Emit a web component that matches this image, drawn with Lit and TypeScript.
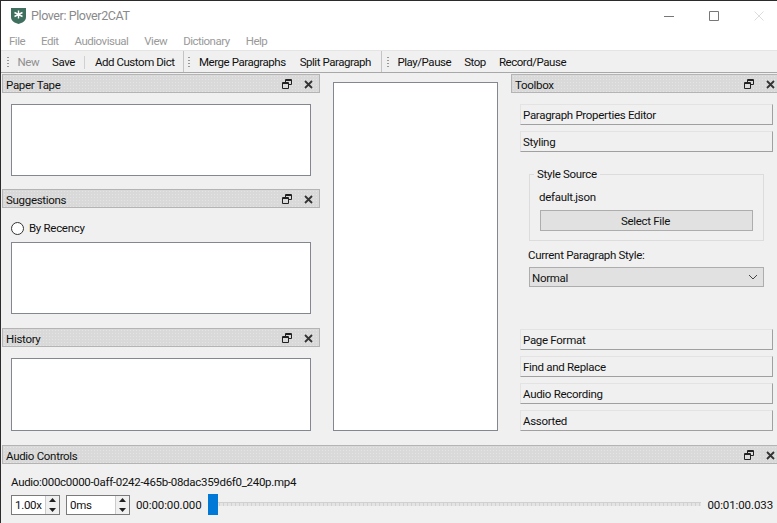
import { LitElement, css, html } from 'lit'
import { customElement } from 'lit/decorators.js'

const floatIcon = html`<svg width="10" height="10" viewBox="0 0 10 10" fill="none" stroke="#222" stroke-width="1">
  <path d="M3.5 3V.5h6v5H7M.5 3.5h6v6h-6zM.5 4.5h6M3.5 1.5h6" />
</svg>`
const closeIcon = html`<svg width="9" height="9" viewBox="0 0 9 9" fill="none" stroke="#333" stroke-width="1.8">
  <path d="M1 1l7 7M8 1l-7 7" />
</svg>`
const spinArrows = html`<span class="spin">
  <svg width="13" height="9" viewBox="0 0 13 9"><path d="M6.5 2l3.5 4H3z" fill="#222" /></svg>
  <svg width="13" height="9" viewBox="0 0 13 9"><path d="M6.5 7L3 3h7z" fill="#222" /></svg>
</span>`

@customElement('app-root')
export class AppRoot extends LitElement {
  static styles = css`
    :host {
      display: block;
      width: 777px;
      height: 523px;
      overflow: hidden;
      font-family: Roboto, 'Liberation Sans', Arial, sans-serif;
      font-size: 11.5px;
      letter-spacing: -0.3px;
      line-height: 16px;
      color: #111;
    }
    * { box-sizing: border-box; }
    .window {
      height: 523px;
      display: flex;
      flex-direction: column;
      background: #f0f0f0;
      border-top: 1px solid #2b2b2b;
      border-left: 1px solid #2b2b2b;
    }
    .titlebar {
      height: 30px;
      flex: none;
      display: flex;
      align-items: center;
      background: #fff;
      padding-left: 10px;
      font-size: 12.5px;
      letter-spacing: -0.4px;
      color: #8a8a8a;
      gap: 5px;
    }
    .winbtns {
      margin-left: auto;
      display: flex;
      align-items: center;
      gap: 35px;
      padding-right: 13px;
    }
    .menubar {
      height: 19px;
      flex: none;
      display: flex;
      align-items: center;
      gap: 16px;
      padding-left: 8px;
      background: #fff;
      color: #9a9a9a;
      letter-spacing: -0.5px;
    }
    .toolbar {
      height: 23px;
      flex: none;
      display: flex;
      align-items: center;
      background: #f0f0f0;
      border-top: 1px solid #e4e4e4;
      border-bottom: 1px solid #a8a8a8;
      letter-spacing: -0.45px;
    }
    .tbgroup {
      display: flex;
      align-items: center;
      height: 100%;
      gap: 13px;
      padding-left: 4px;
      padding-right: 8px;
      padding-top: 1px;
      border-right: 1px solid #c4c4c4;
    }
    .tbgroup:first-child { padding-left: 6px; }
    .tbgroup.mid { gap: 14px; padding-right: 10px; }
    .tbgroup:last-child { border-right: none; padding-left: 5px; }
    .grip {
      width: 2px;
      height: 13px;
      margin-right: -4.5px;
      background-image: radial-gradient(#999 0.7px, transparent 0.8px);
      background-size: 2px 3px;
    }
    .sep { width: 1px; height: 13px; background: #d0d0d0; margin: 0 -3.5px; }
    .off { color: #8f8f8f; }
    .main {
      flex: 1;
      display: grid;
      grid-template-columns: 319px 1fr 266px;
      padding-top: 1px;
      min-height: 0;
    }
    .dock-title {
      height: 19px;
      flex: none;
      display: flex;
      align-items: center;
      padding: 1px 6px 0 3px;
      background-color: #d9d9d9;
      background-image: radial-gradient(#e4e4e4 0.5px, transparent 0.6px);
      background-size: 3px 3px;
      border: 1px solid #b4b4b4;
    }
    .dock-title .name { padding-top: 1px; }
    .right .dock-title, .bottom .dock-title {
      padding-right: 2px;
      border-right: none;
    }
    .dock-title .icons {
      margin-left: auto;
      display: flex;
      align-items: center;
      gap: 12px;
    }
    .dock-title svg { display: block; }
    .left {
      padding-left: 1px;
      display: flex;
      flex-direction: column;
    }
    .dock-body {
      padding: 11px 9px 0 9px;
      display: flex;
      flex-direction: column;
    }
    .listbox {
      background: #fff;
      border: 1px solid #828790;
    }
    .radio {
      height: 18px;
      margin-bottom: 5px;
      display: flex;
      align-items: center;
      gap: 5px;
    }
    .radio i {
      width: 13px;
      height: 13px;
      border-radius: 50%;
      background: #fff;
      border: 1px solid #333;
    }
    .center {
      padding: 8px 13px 0 13px;
    }
    .center .listbox { height: 349px; }
    .right {
      display: flex;
      flex-direction: column;
    }
    .toolbox {
      padding: 11px 4px 0 9px;
      display: flex;
      flex-direction: column;
      flex: 1;
    }
    .tab {
      height: 21px;
      flex: none;
      display: flex;
      align-items: center;
      padding-left: 2px;
      background: #f0f0f0;
      border-top: 1px solid #e3e3e3;
      border-left: 1px solid #e3e3e3;
      border-right: 1px solid #a0a0a0;
      border-bottom: 1px solid #a0a0a0;
      margin-bottom: 6px;
    }
    .page {
      height: 171px;
      flex: none;
      padding: 8px 9px 0 9px;
      display: flex;
      flex-direction: column;
    }
    fieldset {
      margin: 0;
      padding: 7px 10px 0 10px;
      height: 75px;
      border: 1px solid #dcdcdc;
      min-width: 0;
    }
    legend { padding: 0 3px; margin-left: -6px; }
    .file { height: 18px; margin-left: -1px; }
    .select-btn {
      height: 21px;
      margin-top: 3px;
      padding-right: 2px;
      display: flex;
      align-items: center;
      justify-content: center;
      background: #e1e1e1;
      border: 1px solid #adadad;
    }
    .style-label { margin-top: 6px; height: 20px; margin-left: -1px; }
    .combo {
      height: 20px;
      display: flex;
      align-items: center;
      padding: 0 5px 0 2px;
      justify-content: space-between;
      background: #e1e1e1;
      border: 1px solid #adadad;
    }
    .combo span { padding-top: 1px; }
    .bottom {
      flex: none;
      height: 78px;
      padding-left: 1px;
      display: flex;
      flex-direction: column;
    }
    .audio-body {
      padding: 10px 4px 0 9px;
      display: flex;
      flex-direction: column;
      gap: 4px;
    }
    .audio-row {
      display: flex;
      align-items: center;
      height: 21px;
    }
    .spinbox {
      height: 20px;
      display: flex;
      align-items: center;
      justify-content: space-between;
      background: #fff;
      border: 1px solid #7a7a7a;
      padding-left: 3px;
    }
    .spin {
      display: flex;
      flex-direction: column;
      width: 14px;
      height: 18px;
      background: #f0f0f0;
      border-left: 1px solid #ccc;
    }
    .spin svg { display: block; }
    .time { letter-spacing: -0.1px; }
    .time.start { margin-left: 6px; }
    .slider {
      flex: 1;
      height: 21px;
      margin-left: 6px;
      margin-right: 6px;
      position: relative;
      display: flex;
      align-items: center;
    }
    .slider .groove {
      flex: 1;
      height: 4px;
      margin-top: -2px;
      background: repeating-linear-gradient(90deg, #e4e4e4 0 3px, #d2d2d2 3px 4px);
      border-top: 1px solid #d0d0d0;
    }
    .slider .handle {
      position: absolute;
      left: 0;
      top: 0;
      width: 10px;
      height: 21px;
      background: #0078d7;
    }
  `

  dockTitle(name: string) {
    return html`<div class="dock-title">
      <span class="name">${name}</span>
      <span class="icons">${floatIcon}${closeIcon}</span>
    </div>`
  }

  render() {
    return html`
      <div class="window">
        <div class="titlebar">
          <svg width="15" height="16" viewBox="0 0 15 16">
            <path d="M0 0h15v9c0 4-4 6-7.5 7C4 15 0 13 0 9z" fill="#3f6f5f" />
            <path d="M7.5 2.5v8M3.5 4.5l8 4M11.5 4.5l-8 4" stroke="#fff" stroke-width="1.4" />
          </svg>
          <span>Plover: Plover2CAT</span>
          <div class="winbtns">
            <svg width="10" height="10" viewBox="0 0 10 10"><path d="M0 5.5h10" stroke="#777" /></svg>
            <svg width="10" height="10" viewBox="0 0 10 10"><path d="M.5.5h9v9h-9z" fill="none" stroke="#777" /></svg>
            <svg width="10" height="10" viewBox="0 0 10 10"><path d="M.5.5l9 9M9.5.5l-9 9" stroke="#ddd" /></svg>
          </div>
        </div>
        <div class="menubar">
          <span>File</span><span>Edit</span><span>Audiovisual</span><span>View</span><span>Dictionary</span><span>Help</span>
        </div>
        <div class="toolbar">
          <div class="tbgroup">
            <i class="grip"></i>
            <span class="off">New</span><span>Save</span><i class="sep"></i><span>Add Custom Dict</span>
          </div>
          <div class="tbgroup mid">
            <i class="grip"></i>
            <span>Merge Paragraphs</span><span>Split Paragraph</span>
          </div>
          <div class="tbgroup">
            <i class="grip"></i>
            <span>Play/Pause</span><span>Stop</span><span>Record/Pause</span>
          </div>
        </div>
        <div class="main">
          <div class="left">
            ${this.dockTitle('Paper Tape')}
            <div class="dock-body" style="height: 96px">
              <div class="listbox" style="height: 72px"></div>
            </div>
            ${this.dockTitle('Suggestions')}
            <div class="dock-body" style="height: 120px">
              <div class="radio"><i></i><span>By Recency</span></div>
              <div class="listbox" style="height: 72px"></div>
            </div>
            ${this.dockTitle('History')}
            <div class="dock-body">
              <div class="listbox" style="height: 73px"></div>
            </div>
          </div>
          <div class="center"><div class="listbox"></div></div>
          <div class="right">
            ${this.dockTitle('Toolbox')}
            <div class="toolbox">
              <div class="tab">Paragraph Properties Editor</div>
              <div class="tab">Styling</div>
              <div class="page">
                <fieldset>
                  <legend>Style Source</legend>
                  <div class="file">default.json</div>
                  <div class="select-btn">Select File</div>
                </fieldset>
                <div class="style-label">Current Paragraph Style:</div>
                <div class="combo">
                  <span>Normal</span>
                  <svg width="10" height="6" viewBox="0 0 10 6"><path d="M1 1l4 4 4-4" fill="none" stroke="#444" /></svg>
                </div>
              </div>
              <div class="tab">Page Format</div>
              <div class="tab">Find and Replace</div>
              <div class="tab">Audio Recording</div>
              <div class="tab">Assorted</div>
            </div>
          </div>
        </div>
        <div class="bottom">
          ${this.dockTitle('Audio Controls')}
          <div class="audio-body">
            <div>Audio:000c0000-0aff-0242-465b-08dac359d6f0_240p.mp4</div>
            <div class="audio-row">
              <div class="spinbox" style="width: 49px"><span>1.00x</span>${spinArrows}</div>
              <div class="spinbox" style="width: 64px; margin-left: 6px"><span>0ms</span>${spinArrows}</div>
              <span class="time start">00:00:00.000</span>
              <div class="slider"><div class="groove"></div><div class="handle"></div></div>
              <span class="time">00:01:00.033</span>
            </div>
          </div>
        </div>
      </div>
    `
  }
}
